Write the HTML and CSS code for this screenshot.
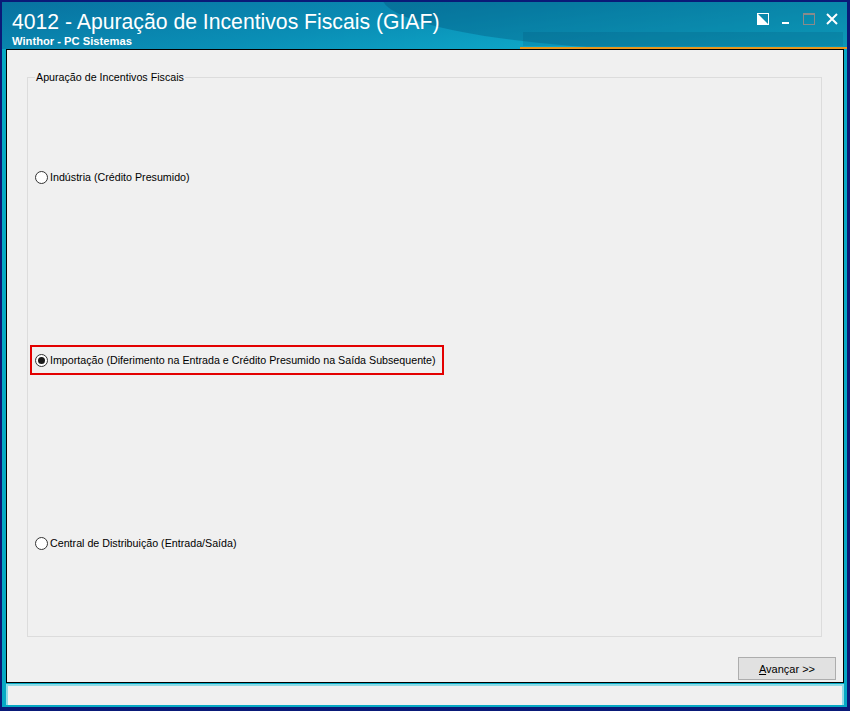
FILE: index.html
```html
<!DOCTYPE html>
<html lang="pt-BR">
<head>
    <meta charset="UTF-8">
    <meta name="viewport" content="width=device-width, initial-scale=1.0">
    <title>4012 - Apuração de Incentivos Fiscais (GIAF)</title>
    <link rel="stylesheet" href="styles.css">
</head>
<body>
    <div class="window">
        <div class="frame">
            <!-- barra de titulo -->
            <div class="titlebar">
                <div class="swoosh swoosh-top"></div>
                <div class="swoosh swoosh-band"></div>
                <div class="title-texts">
                    <h1 class="title">4012 - Apuração de Incentivos Fiscais (GIAF)</h1>
                    <div class="subtitle">Winthor - PC Sistemas</div>
                </div>
                <div class="controls">
                    <svg class="ctl" width="12" height="12" viewBox="0 0 12 12">
                        <rect x="0.5" y="0.5" width="11" height="11" fill="none" stroke="#fff" stroke-width="1"/>
                        <polygon points="1,11 11,1 1,1" fill="#fff" transform="rotate(-90 6 6)"/>
                    </svg>
                    <svg class="ctl" width="12" height="12" viewBox="0 0 12 12">
                        <rect x="2" y="9" width="7" height="2" fill="#fff"/>
                    </svg>
                    <svg class="ctl" width="12" height="12" viewBox="0 0 12 12">
                        <rect x="0.5" y="0.5" width="11" height="11" fill="none" stroke="#8a8a8a" stroke-width="1"/>
                        <rect x="0" y="0" width="12" height="2" fill="#8a8a8a"/>
                    </svg>
                    <svg class="ctl" width="12" height="12" viewBox="0 0 12 12">
                        <path d="M1 1 L11 11 M11 1 L1 11" stroke="#fff" stroke-width="2"/>
                    </svg>
                </div>
                <div class="accent"></div>
            </div>

            <!-- area do formulario -->
            <div class="client">
                <fieldset class="group">
                    <legend>Apuração de Incentivos Fiscais</legend>
                    <div class="options">
                        <label class="option">
                            <span class="radio"></span>
                            Indústria (Crédito Presumido)
                        </label>
                        <label class="option option-marked">
                            <span class="radio radio-checked"></span>
                            Importação (Diferimento na Entrada e Crédito Presumido na Saída Subsequente)
                        </label>
                        <label class="option">
                            <span class="radio"></span>
                            Central de Distribuição (Entrada/Saída)
                        </label>
                    </div>
                </fieldset>
                <div class="footer">
                    <button class="btn" type="button"><u>A</u>vançar &gt;&gt;</button>
                </div>
            </div>

            <div class="statusbar"></div>
        </div>
    </div>
</body>
</html>
```

FILE: styles.css
```css
*{
    box-sizing: border-box;
}
body{
    margin: 0px;
    font-family: "Liberation Sans", Arial, sans-serif;
    font-size: 10.7px;
    color: #000;
}
.window{
    width: 850px;
    height: 711px;
    background-color: #0a1a78;
    padding: 2px 3px 4px 2px;
}
.frame{
    height: 100%;
    display: flex;
    flex-direction: column;
    background-color: #06a9c4;
    padding: 0 3px 2px 4px;
}
/* title bar */
.titlebar{
    position: relative;
    height: 47px;
    margin: 0 -3px 0 -4px;
    padding: 0 9px 0 10px;
    display: flex;
    justify-content: space-between;
    background: linear-gradient(172deg, #0872a0 0%, #0a8fb6 45%, #12bcd8 100%);
    overflow: hidden;
}
.swoosh{
    position: absolute;
    pointer-events: none;
}
.swoosh-top{
    left: 380px;
    top: -60px;
    width: 700px;
    height: 110px;
    border-radius: 50%;
    background: rgba(0, 60, 100, 0.28);
}
.swoosh-band{
    left: 521px;
    top: 30px;
    width: 320px;
    height: 14px;
    background: rgba(0, 70, 110, 0.18);
}
.title-texts{
    position: relative;
    display: flex;
    flex-direction: column;
    padding-top: 8px;
}
.title{
    margin: 0;
    font-family: "Liberation Sans", Arial, sans-serif;
    font-weight: normal;
    font-size: 21.2px;
    line-height: 24px;
    color: #fff;
}
.subtitle{
    font-weight: bold;
    font-size: 11.2px;
    line-height: 13px;
    color: #fff;
    margin-top: 1px;
}
.controls{
    position: relative;
    display: flex;
    gap: 11px;
    padding-top: 11px;
    height: 23px;
}
.ctl{
    display: block;
}
.accent{
    position: absolute;
    left: 518px;
    right: 0;
    top: 45px;
    height: 2px;
    background-color: #e8961e;
}
/* client area */
.client{
    flex: 1;
    display: flex;
    flex-direction: column;
    background-color: #f0f0f0;
    border: 1px solid #000;
    padding: 21px 21px 0 20px;
}
.group{
    flex: 1;
    margin: 0;
    padding: 0;
    border: 1px solid #dcdcdc;
    min-width: 0;
}
.group legend{
    margin-left: 7px;
    padding: 0 1px;
    line-height: 13px;
    color: #000;
}
.options{
    display: flex;
    flex-direction: column;
    padding: 85px 0 0 7px;
    gap: 167px;
}
.option{
    display: flex;
    align-items: center;
    gap: 2px;
    height: 16px;
    align-self: flex-start;
}
.option-marked{
    margin: -7px 0 -7px -5px;
    height: 30px;
    padding: 0 6px 0 3px;
    border: 2px solid #e30000;
}
.radio{
    width: 13px;
    height: 13px;
    border: 1px solid #333;
    border-radius: 50%;
    background-color: #fff;
    display: flex;
    justify-content: center;
    align-items: center;
}
.radio-checked::after{
    content: "";
    width: 7px;
    height: 7px;
    border-radius: 50%;
    background-color: #1a1a1a;
}
.footer{
    display: flex;
    justify-content: flex-end;
    padding: 20px 7px 2px 0;
    margin-right: -21px;
}
.btn{
    width: 98px;
    height: 23px;
    border: 1px solid #adadad;
    background-color: #e1e1e1;
    font-family: "Liberation Sans", Arial, sans-serif;
    font-size: 11px;
    color: #000;
    padding: 0;
}
/* status bar */
.statusbar{
    height: 21px;
    margin-top: 1px;
    background-color: #f0f0f0;
    border: 2px solid #8fdbe6;
    border-bottom: none;
}
```
